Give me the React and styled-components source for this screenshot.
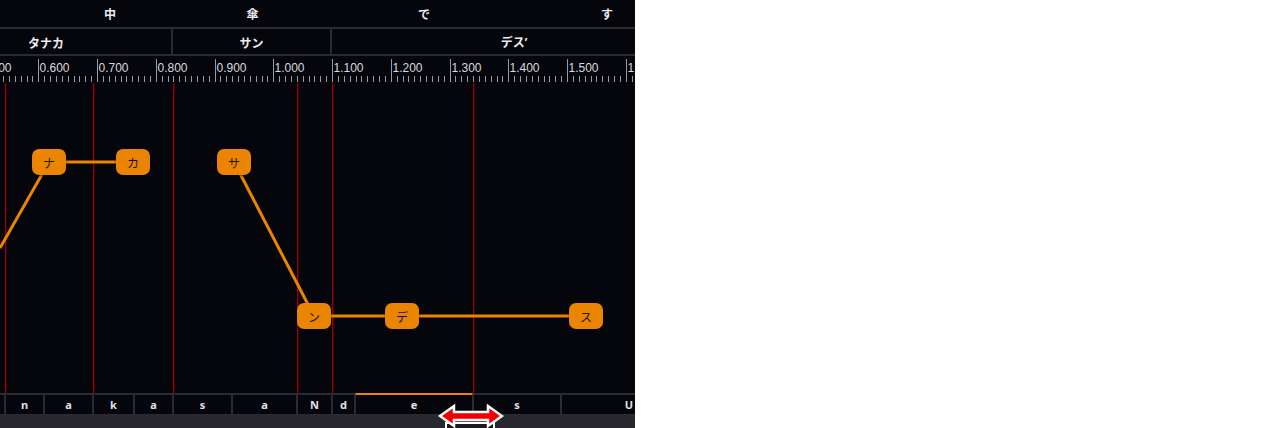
import styled, { createGlobalStyle } from 'styled-components'

const GlobalStyle = createGlobalStyle`
  html, body {
    margin: 0;
    padding: 0;
    background: #ffffff;
  }
  body {
    font-family: "Noto Sans CJK JP", "Noto Sans", sans-serif;
  }
`

const LINE = '#2a2a31'
const ORANGE = '#eb8400'
const PX_PER_SEC = 587.5
const ORIGIN = 38.3 - 0.6 * PX_PER_SEC

const words = [
  { text: '中', w: 126 },
  { text: '傘', w: 159 },
  { text: 'で', w: 184 },
  { text: 'す', w: 182 },
]

const kana = [
  { text: 'タナカ', w: 252 },
  { text: 'サン', w: 159 },
  { text: 'デスʼ', w: 366 },
]

const phonemes = [
  { text: '', w: 40 },
  { text: 'n', w: 39 },
  { text: 'a', w: 49 },
  { text: 'k', w: 41 },
  { text: 'a', w: 39 },
  { text: 's', w: 59 },
  { text: 'a', w: 65 },
  { text: 'N', w: 35 },
  { text: 'd', w: 23 },
  { text: 'e', w: 118, active: true },
  { text: 's', w: 88 },
  { text: 'U', w: 136 },
]

const boundaries = [5, 93, 173, 297, 332, 473]

const notes = [
  { text: 'ナ', x: 49, y: 79 },
  { text: 'カ', x: 133, y: 79 },
  { text: 'サ', x: 234, y: 79 },
  { text: 'ン', x: 314, y: 233 },
  { text: 'デ', x: 402, y: 233 },
  { text: 'ス', x: 586, y: 233 },
]

function Ruler() {
  const majors = []
  for (let i = 5; i <= 16; i++) majors.push(i / 10)
  const minors = []
  for (let i = 0; i < 120; i++) {
    const x = ORIGIN + 0.5 * PX_PER_SEC + (i * PX_PER_SEC) / 100
    if (x > -2 && x < 640 && i % 10 !== 0) minors.push(Math.round(x))
  }
  return (
    <RulerSvg width="635" height="26" shapeRendering="crispEdges">
      {minors.map((x, i) => (
        <rect key={i} x={x} y="20" width="1" height="6" fill="#9a9aa0" />
      ))}
      {majors.map((t) => {
        const x = Math.round(ORIGIN + t * PX_PER_SEC)
        return (
          <g key={t}>
            <rect x={x} y="3" width="1" height="23" fill="#9a9aa0" />
            <RulerLabel x={x + 1.5} y="16">{t.toFixed(3)}</RulerLabel>
          </g>
        )
      })}
    </RulerSvg>
  )
}

function PitchCanvas() {
  const pts = [[0, 165], ...notes.slice(0, 2).map((n) => [n.x, n.y])]
  const pts2 = notes.slice(2).map((n) => [n.x, n.y])
  const toPath = (p) => p.map(([x, y], i) => `${i ? 'L' : 'M'}${x} ${y}`).join(' ')
  return (
    <Canvas>
      {boundaries.map((x) => (
        <Boundary key={x} style={{ left: x }} />
      ))}
      <Overlay width="635" height="310">
        <path d={toPath(pts)} fill="none" stroke={ORANGE} strokeWidth="3" strokeLinejoin="round" />
        <path d={toPath(pts2)} fill="none" stroke={ORANGE} strokeWidth="3" strokeLinejoin="round" />
      </Overlay>
      {notes.map((n) => (
        <Note key={n.text} style={{ left: n.x - 17, top: n.y - 13 }}>
          {n.text}
        </Note>
      ))}
    </Canvas>
  )
}

function ResizeCursor() {
  return (
    <CursorSvg width="66" height="30" viewBox="0 0 66 30">
      <rect x="8" y="19" width="48" height="14" fill="#1a1a1f" stroke="#ffffff" strokeWidth="2" />
      <path
        d="M2 12 L16 2 L16 8 L50 8 L50 2 L64 12 L50 22 L50 16 L16 16 L16 22 Z"
        fill="#f20000"
        stroke="#ffffff"
        strokeWidth="2.5"
        strokeLinejoin="miter"
      />
    </CursorSvg>
  )
}

export default function App() {
  return (
    <>
      <GlobalStyle />
      <Panel>
        <WordRow>
          <Track $start={47}>
            {words.map((w) => (
              <WordCell key={w.text} $w={w.w}>{w.text}</WordCell>
            ))}
          </Track>
        </WordRow>
        <KanaRow>
          <Track $start={-79}>
            {kana.map((k) => (
              <KanaCell key={k.text} $w={k.w}>{k.text}</KanaCell>
            ))}
          </Track>
        </KanaRow>
        <RulerRow>
          <Ruler />
        </RulerRow>
        <PitchCanvas />
        <PhonemeRow>
          <Track $start={-35}>
            {phonemes.map((p, i) => (
              <PhonemeCell key={i} $w={p.w} $active={p.active}>{p.text}</PhonemeCell>
            ))}
          </Track>
        </PhonemeRow>
        <ScrollBar>
          <ResizeCursor />
        </ScrollBar>
      </Panel>
    </>
  )
}

const Panel = styled.div`
  display: flex;
  flex-direction: column;
  width: 635px;
  height: 428px;
  background: #05050c;
  overflow: hidden;
  position: relative;
`

const Track = styled.div`
  display: flex;
  height: 100%;
  margin-left: ${(p) => p.$start}px;
`

const WordRow = styled.div`
  height: 27px;
  border-bottom: 2px solid ${LINE};
  flex-shrink: 0;
`

const WordCell = styled.div`
  flex: 0 0 ${(p) => p.$w}px;
  display: flex;
  align-items: center;
  justify-content: center;
  color: #ececec;
  font-size: 12px;
  font-weight: 700;
`

const KanaRow = styled.div`
  height: 25px;
  border-bottom: 2px solid ${LINE};
  flex-shrink: 0;
`

const KanaCell = styled.div`
  flex: 0 0 ${(p) => p.$w}px;
  box-sizing: border-box;
  border-right: 2px solid ${LINE};
  display: flex;
  align-items: center;
  justify-content: center;
  color: #ececec;
  font-size: 12px;
  font-weight: 700;
  padding-top: 1px;
`

const RulerRow = styled.div`
  height: 26px;
  flex-shrink: 0;
`

const RulerSvg = styled.svg`
  display: block;
`

const RulerLabel = styled.text`
  font-family: "Liberation Sans Narrow", "Liberation Sans", Arial, sans-serif;
  font-size: 12px;
  fill: #dadade;
`

const Canvas = styled.div`
  position: relative;
  height: 310px;
  flex-shrink: 0;
  margin-top: 1px;
`

const Boundary = styled.div`
  position: absolute;
  top: 0;
  bottom: 0;
  width: 1px;
  background: #9a0000;
  box-shadow: 1px 0 0 #3c0006;
`

const Overlay = styled.svg`
  position: absolute;
  left: 0;
  top: 0;
`

const Note = styled.div`
  position: absolute;
  width: 34px;
  height: 26px;
  box-sizing: border-box;
  border-radius: 7px;
  background: ${ORANGE};
  color: #1b1206;
  font-size: 12px;
  display: flex;
  align-items: center;
  justify-content: center;
  box-shadow: 0 1px 2px rgba(0, 0, 0, 0.6);
`

const PhonemeRow = styled.div`
  height: 22px;
  flex-shrink: 0;
`

const PhonemeCell = styled.div`
  flex: 0 0 ${(p) => p.$w}px;
  box-sizing: border-box;
  border: 1px solid ${LINE};
  border-top: 2px solid ${(p) => (p.$active ? ORANGE : LINE)};
  display: flex;
  align-items: center;
  justify-content: center;
  color: #e2e2e6;
  font-family: "Noto Sans", sans-serif;
  font-size: 11px;
  font-weight: 700;
`

const ScrollBar = styled.div`
  flex: 1;
  background: #28282e;
  position: relative;
`

const CursorSvg = styled.svg`
  position: absolute;
  left: 438px;
  top: -11px;
`
